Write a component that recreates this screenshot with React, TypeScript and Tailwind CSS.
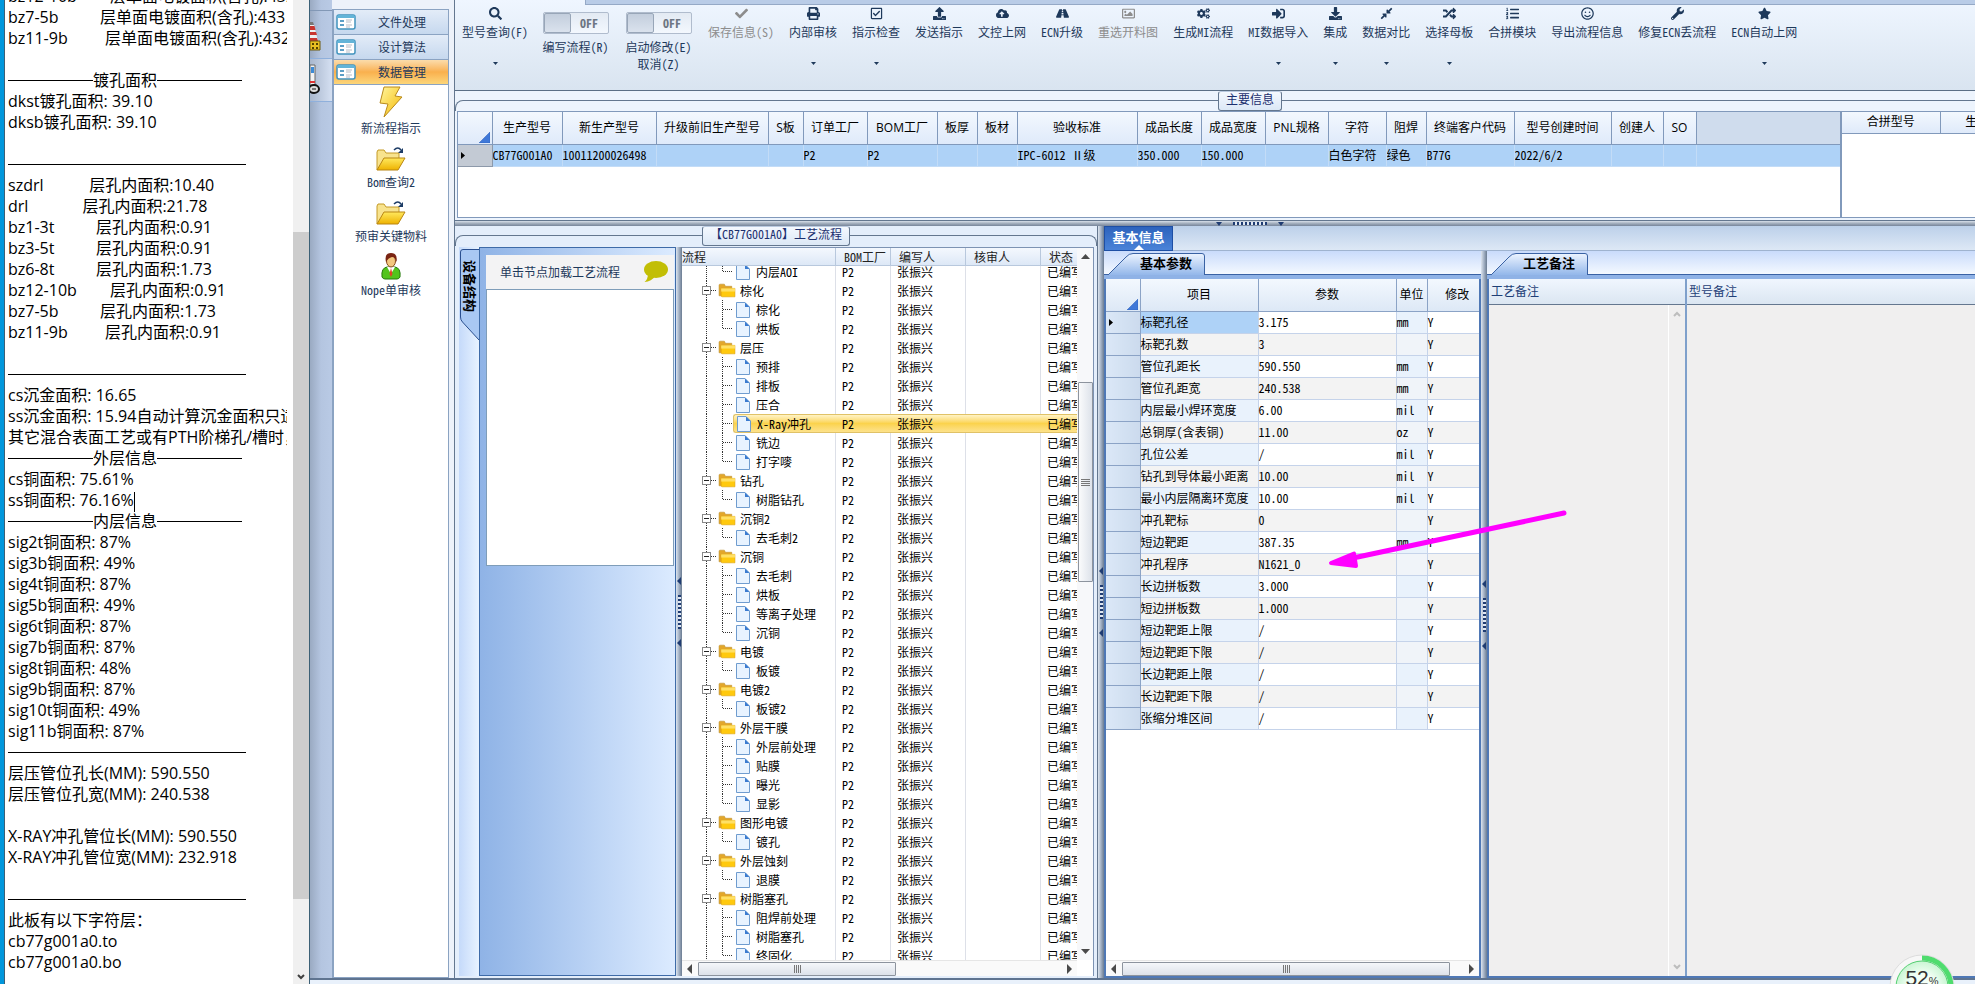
import React, { useEffect, useRef } from 'react';
import {
  FaSearch, FaCheck, FaPrint, FaRegCheckSquare, FaUpload, FaCloudUploadAlt, FaRoad, FaRegImage,
  FaCogs, FaSignInAlt, FaDownload, FaCompressAlt, FaRandom, FaListOl, FaRegSmile, FaWrench, FaStar,
} from 'react-icons/fa';

const SONG = "font-['Noto_Sans_Mono_CJK_SC','Noto_Sans_CJK_SC',monospace]";
const YAHEI = "font-['Open_Sans','Noto_Sans_CJK_SC',sans-serif]";

/* ---------- report window ---------- */

const RULE = '#rule';
const report: string[] = [
  'bz12-10b        层单面电镀面积(含孔):432',
  'bz7-5b          层单面电镀面积(含孔):433',
  'bz11-9b         层单面电镀面积(含孔):432',
  '', '#镀孔面积', 'dkst镀孔面积: 39.10', 'dksb镀孔面积: 39.10', '', RULE,
  'szdrl           层孔内面积:10.40',
  'drl             层孔内面积:21.78',
  'bz1-3t          层孔内面积:0.91',
  'bz3-5t          层孔内面积:0.91',
  'bz6-8t          层孔内面积:1.73',
  'bz12-10b        层孔内面积:0.91',
  'bz7-5b          层孔内面积:1.73',
  'bz11-9b         层孔内面积:0.91',
  '', RULE, 'cs沉金面积: 16.65', 'ss沉金面积: 15.94自动计算沉金面积只适用',
  '其它混合表面工艺或有PTH阶梯孔/槽时，请', '#外层信息', 'cs铜面积: 75.61%', 'ss铜面积: 76.16%', '#内层信息',
  'sig2t铜面积: 87%', 'sig3b铜面积: 49%', 'sig4t铜面积: 87%', 'sig5b铜面积: 49%', 'sig6t铜面积: 87%',
  'sig7b铜面积: 87%', 'sig8t铜面积: 48%', 'sig9b铜面积: 87%', 'sig10t铜面积: 49%', 'sig11b铜面积: 87%',
  RULE, '层压管位孔长(MM): 590.550', '层压管位孔宽(MM): 240.538', '',
  'X-RAY冲孔管位长(MM): 590.550', 'X-RAY冲孔管位宽(MM): 232.918', '', RULE,
  '此板有以下字符层：', 'cb77g001a0.to', 'cb77g001a0.bo', '', '',
];

function ReportLine({ text }: { text: string }) {
  if (text === RULE) {
    return <div className="flex h-[21px] w-[238px] items-center"><hr className="w-full border-t border-black" /></div>;
  }
  if (text.startsWith('#')) {
    return (
      <div className="flex h-[21px] w-[234px] items-center">
        <hr className="flex-1 border-t border-black" />
        <span>{text.slice(1)}</span>
        <hr className="flex-1 border-t border-black" />
      </div>
    );
  }
  return (
    <div className="h-[21px]">
      {text}
      {text === 'ss铜面积: 76.16%' && <span className="inline-block h-[20px] w-px bg-black align-middle" />}
    </div>
  );
}

function ReportWindow() {
  const box = useRef<HTMLDivElement>(null);
  useEffect(() => { if (box.current) box.current.scrollTop = 14; }, []);
  return (
    <section className="flex w-[310px] shrink-0 border-l-4 border-[#0197dc]">
      <div className="flex min-w-0 flex-1 border-x border-[#3c6076] bg-white">
        <div ref={box} className={`min-w-0 flex-1 overflow-hidden whitespace-pre pl-[3px] text-base leading-[21px] text-black ${YAHEI}`}>
          <div className="w-[279px] overflow-hidden">
            {report.map((t, i) => <ReportLine key={i} text={t} />)}
          </div>
        </div>
        <div className="flex w-[16px] shrink-0 flex-col bg-[#f0f0f0]">
          <div className="h-[232px]" />
          <div className="h-[667px] bg-[#cdcdcd]" />
          <svg className="mt-auto mb-[3px] ml-[4px] h-[8px] w-[8px]" viewBox="0 0 8 8" fill="none" stroke="#404040" strokeWidth="2"><path d="M1 2l3 3 3-3" /></svg>
        </div>
      </div>
    </section>
  );
}

/* ---------- left navigation ---------- */

function EdgeStrip() {
  return (
    <div className="flex w-[22px] shrink-0 flex-col bg-gradient-to-r from-[#9aaac2] via-[#b4c5e0] to-[#b9cae5]">
      <div className="h-[11px] border-b border-[#8298b6]" />
      <div className="h-[48px] border-b border-[#8fb0dc] pt-[10px]">
        <svg className="h-[30px] w-[11px]" viewBox="0 0 11 30">
          <path d="M0 1h3l1 3H0z" fill="#777" /><path d="M0 4h4l4 16H0z" fill="#eee" />
          <path d="M0 5h4.500l1 4H0zM0 11h6l1 3H0zM0 17h7l1 3H0z" fill="#c8352f" />
          <path d="M0 20h10v9H0z" fill="#e8c022" stroke="#6c5a10" /><path d="M2 22h2v2H2zM6 22h2v2H6zM2 26h2v2H2zM6 26h2v2H6z" fill="#554400" />
        </svg>
      </div>
      <div className="h-[43px] border-b border-[#8fb0dc] bg-gradient-to-r from-[#a9b7cd] to-[#d5e0f2] pt-[5px]">
        <svg className="h-[31px] w-[11px]" viewBox="0 0 11 31">
          <path d="M0 1h5v20H0z" fill="#f3f3f3" stroke="#666" /><path d="M1 3h3v6H1z" fill="#3d8bd6" /><path d="M0 17h5v2H0z" fill="#d33" />
          <ellipse cx="4" cy="25" rx="5" ry="4" fill="#ddd" stroke="#111" strokeWidth="2" /><path d="M2 25h4" stroke="#111" />
        </svg>
      </div>
    </div>
  );
}

function FormIcon() {
  return (
    <svg className="h-[16px] w-[20px]" viewBox="0 0 20 16">
      <rect x="1" y="1" width="18" height="14" rx="2" fill="#fff" stroke="#4193bd" strokeWidth="1.500" />
      <path d="M1 3q0-2 2-2h14q2 0 2 2v1H1z" fill="#63b4d8" />
      <path d="M4 6h4v2H4zM4 10h4v2H4z" fill="#5c9fc6" /><path d="M10 6h6M10 8h5M10 11h6M10 13h4" stroke="#b5bcc6" />
    </svg>
  );
}

function Bolt() {
  return (
    <svg className="h-[32px] w-[24px]" viewBox="0 0 24 32">
      <defs><linearGradient id="bolt" x1="0" y1="0" x2="1" y2="1"><stop offset="0" stopColor="#fff6a0" /><stop offset="1" stopColor="#f5b800" /></linearGradient></defs>
      <path d="M5 1L21 1 16 10 23 11 5 31 9 18 1 17z" fill="url(#bolt)" stroke="#b98a1c" strokeLinejoin="round" />
    </svg>
  );
}

function OpenFolder() {
  return (
    <svg className="h-[26px] w-[30px]" viewBox="0 0 30 26">
      <defs><linearGradient id="of" x1="0" y1="0" x2="0" y2="1"><stop offset="0" stopColor="#ffe95e" /><stop offset="1" stopColor="#eeb200" /></linearGradient></defs>
      <path d="M1 24V6l1-2h6l2 3h13v5" fill="#f8e38e" stroke="#c49a26" />
      <path d="M1 24L8 12H29L22 24z" fill="url(#of)" stroke="#b98612" strokeLinejoin="round" />
      <path d="M18 4q4-4 7 0" fill="none" stroke="#1d3c66" strokeWidth="1.500" /><path d="M27 2v5h-5z" fill="#1d3c66" />
    </svg>
  );
}

function Person() {
  return (
    <svg className="h-[28px] w-[22px]" viewBox="0 0 22 28">
      <path d="M2 25q-1-9 5-10h8q6 1 5 10-1 2-3 2H5q-2 0-3-2z" fill="#52c41c" stroke="#257a0b" />
      <path d="M7 15l4 7 4-7z" fill="#fff" /><path d="M11 16l1.500 6-1.500 3-1.500-3z" fill="#e04326" />
      <ellipse cx="11" cy="9" rx="4.500" ry="6" fill="#f3c77e" stroke="#8a4a1a" />
      <path d="M6 10Q4 1 11 1t5.500 9Q15 5 12 5 8 6 6 10z" fill="#7a2413" />
    </svg>
  );
}

const navItems: [string, React.ReactNode][] = [
  ['新流程指示', <Bolt key="a" />], ['Bom查询2', <OpenFolder key="b" />], ['预审关键物料', <OpenFolder key="c" />], ['Nope单审核', <Person key="d" />],
];

function Navigation() {
  return (
    <nav className="flex w-[122px] shrink-0 flex-col bg-[#edf2fa] pr-[5px] pt-[9px] text-[#1e395b]">
      <div className="flex flex-1 flex-col border border-[#8ba3c2] border-l-2 bg-white">
        {['文件处理', '设计算法', '数据管理'].map((t, i) => (
          <button key={t} className={`flex h-[25px] items-center border-b border-[#8ba3c2] pl-[2px] ${i === 2 ? 'bg-gradient-to-b from-[#fbdcab] via-[#f9b04d] to-[#fcd67a]' : 'bg-gradient-to-b from-[#e3ecf8] to-[#c6d8ee]'}`}>
            <FormIcon />
            <span className="flex-1 text-center text-xs">{t}</span>
          </button>
        ))}
        {navItems.map(([label, icon]) => (
          <button key={label} className="flex h-[54px] flex-col items-center justify-end pb-[3px] text-xs leading-4">
            {icon}
            <span className="mt-[2px]">{label}</span>
          </button>
        ))}
      </div>
    </nav>
  );
}

/* ---------- toolbar ---------- */

type Tool = { label: string; icon: React.ReactNode; menu?: boolean; off?: boolean };
const tools: Tool[] = [
  { label: '保存信息(S)', icon: <FaCheck />, off: true },
  { label: '内部审核', icon: <FaPrint />, menu: true },
  { label: '指示检查', icon: <FaRegCheckSquare />, menu: true },
  { label: '发送指示', icon: <FaUpload /> },
  { label: '文控上网', icon: <FaCloudUploadAlt /> },
  { label: 'ECN升级', icon: <FaRoad /> },
  { label: '重选开料图', icon: <FaRegImage />, off: true },
  { label: '生成MI流程', icon: <FaCogs /> },
  { label: 'MI数据导入', icon: <FaSignInAlt />, menu: true },
  { label: '集成', icon: <FaDownload />, menu: true },
  { label: '数据对比', icon: <FaCompressAlt />, menu: true },
  { label: '选择母板', icon: <FaRandom />, menu: true },
  { label: '合拼模块', icon: <FaListOl /> },
  { label: '导出流程信息', icon: <FaRegSmile /> },
  { label: '修复ECN丢流程', icon: <FaWrench /> },
  { label: 'ECN自动上网', icon: <FaStar />, menu: true },
];

function ToolButton({ label, icon, menu, off }: Tool) {
  return (
    <button disabled={off} className={`flex h-[62px] shrink-0 flex-col items-center px-[7px] text-[13px] ${off ? 'text-[#8d8d8d]' : 'text-[#1e395b]'}`}>
      {icon}
      <span className="mt-[4px] text-xs leading-4">{label}</span>
      {menu && <svg className="mt-[22px] h-[3px] w-[5px] shrink-0" viewBox="0 0 5 3" fill="currentColor"><path d="M0 0h5L2.500 3z" /></svg>}
    </button>
  );
}

function ToggleButton({ lines }: { lines: string[] }) {
  return (
    <button className="flex w-[83px] shrink-0 flex-col items-center pt-[5px] text-xs leading-[17px] text-[#1e395b]">
      <span className="mb-[4px] flex h-[22px] w-[66px] rounded-[2px] border border-[#b0bccd] bg-gradient-to-b from-[#e3eaf3] to-[#f3f8fe]">
        <span className="w-[27px] rounded-[2px] border border-[#98a6b8] bg-gradient-to-b from-[#c3cedd] to-[#dae2ed]" />
        <span className="flex-1 text-center font-bold leading-5 text-[#6d7683]">OFF</span>
      </span>
      {lines.map((l) => <span key={l}>{l}</span>)}
    </button>
  );
}

function Toolbar() {
  return (
    <header className="flex h-[91px] shrink-0 flex-col border-b border-[#5b6f86] bg-gradient-to-b from-[#eff6ff] to-[#d9e4f0]">
      <div className="ml-[130px] h-[5px] shrink-0 border-b border-l border-[#95a9c6] bg-[#b9cce7]" />
      <div className="flex items-start gap-px overflow-hidden pt-[2px]">
        <ToolButton label="型号查询(F)" icon={<FaSearch />} menu />
        <div className="-ml-[2px] flex">
          <ToggleButton lines={['编写流程(R)']} />
          <ToggleButton lines={['启动修改(E)', '取消(Z)']} />
        </div>
        {tools.map((t) => <ToolButton key={t.label} {...t} />)}
      </div>
    </header>
  );
}

/* ---------- shared pieces ---------- */

const Corner = () => (
  <svg className="ml-auto mr-[2px] mt-auto h-[11px] w-[11px]" viewBox="0 0 11 11"><path d="M11 0v11H0z" fill="#3f78d8" stroke="#2a5db8" strokeWidth="0.500" /></svg>
);
const RowMark = () => <svg className="ml-[3px] h-[7px] w-[4px]" viewBox="0 0 4 7"><path d="M0 0l4 3.500L0 7z" fill="#000" /></svg>;

function VerticalSplitter() {
  return (
    <div className="flex w-[6px] shrink-0 flex-col items-center justify-center gap-[10px] bg-gradient-to-r from-[#dde5ef] via-[#a3b1c4] to-[#6b7c92]">
      <svg className="h-[8px] w-[4px]" viewBox="0 0 4 8"><path d="M4 0v8L0 4z" fill="#1f3c72" /></svg>
      <div className="h-[34px] w-[3px] bg-[repeating-linear-gradient(to_bottom,#1f3c72_0_2px,#dfe7f2_2px_4px)]" />
      <svg className="h-[8px] w-[4px]" viewBox="0 0 4 8"><path d="M4 0v8L0 4z" fill="#1f3c72" /></svg>
    </div>
  );
}

function Legend({ children, className }: { children: React.ReactNode; className: string }) {
  return (
    <div className={`relative flex h-[20px] justify-center before:absolute before:inset-x-0 before:top-[9px] before:bottom-0 before:rounded-t-lg before:border before:border-b-0 before:border-[#64778f] ${className}`}>
      <h2 className="relative rounded-[3px] border border-[#64778f] border-t-[#b9c9df] bg-gradient-to-b from-[#f4f8fe] to-[#dce8f6] px-[7px] pb-[3px] text-xs leading-[14px] text-[#1c2f6e]">{children}</h2>
    </div>
  );
}

function HScroll({ thumb }: { thumb: string }) {
  return (
    <div className="flex h-[16px] min-w-0 flex-1 items-center border-t border-[#e6e6e6] bg-[#fafafa] px-[5px]">
      <svg className="h-[10px] w-[5px] shrink-0" viewBox="0 0 5 10"><path d="M5 0v10L0 5z" fill="#4a4a4a" /></svg>
      <div className={`ml-[6px] mr-[5px] flex h-[14px] items-center justify-center rounded-[1px] border border-[#8d949e] bg-gradient-to-b from-[#f5f7fa] to-[#dde2ea] ${thumb}`}>
        <div className="h-[8px] w-[7px] bg-[repeating-linear-gradient(to_right,#777_0_1px,transparent_1px_2px)]" />
      </div>
      <svg className="ml-auto h-[10px] w-[5px] shrink-0" viewBox="0 0 5 10"><path d="M0 0v10L5 5z" fill="#4a4a4a" /></svg>
    </div>
  );
}

/* ---------- main information ---------- */

const mainCols: [string, string, string][] = [
  ['生产型号', 'CB77G001A0', 'w-[70px]'], ['新生产型号', '10011200026498', 'w-[94px]'], ['升级前旧生产型号', '', 'w-[112px]'],
  ['S板', '', 'w-[35px]'], ['订单工厂', 'P2', 'w-[64px]'], ['BOM工厂', 'P2', 'w-[70px]'], ['板厚', '', 'w-[40px]'],
  ['板材', '', 'w-[40px]'], ['验收标准', 'IPC-6012 Ⅱ级', 'w-[120px]'], ['成品长度', '350.000', 'w-[64px]'],
  ['成品宽度', '150.000', 'w-[64px]'], ['PNL规格', '', 'w-[63px]'], ['字符', '白色字符', 'w-[58px]'], ['阻焊', '绿色', 'w-[40px]'],
  ['终端客户代码', 'B77G', 'w-[88px]'], ['型号创建时间', '2022/6/2', 'w-[97px]'], ['创建人', '', 'w-[52px]'], ['SO', '', 'w-[33px]'],
];

function MainInfo() {
  return (
    <section className="flex h-[130px] shrink-0 flex-col border-b border-[#64778f] bg-[#edf4fd]">
      <Legend className="-mr-[70px]">主要信息</Legend>
      <div className="mb-[2px] ml-[2px] flex min-h-0 flex-1 border border-r-0 border-[#8199bb] bg-white">
        <div className="min-w-0 flex-1 overflow-hidden border-r-2 border-[#8199bb]">
          <table className="w-full table-fixed border-collapse text-xs text-black">
            <thead>
              <tr className={`h-[32px] bg-gradient-to-b from-[#f3f8fe] to-[#dfeafa] ${YAHEI}`}>
                <th className="w-[34px] border-b border-r border-[#8199bb] p-0"><div className="flex h-[31px]"><Corner /></div></th>
                {mainCols.map(([h, , w]) => (
                  <th key={h} className={`overflow-hidden whitespace-nowrap border-b border-r border-[#8199bb] p-0 font-normal ${w}`}>{h}</th>
                ))}
                <th className="border-b border-[#8199bb] bg-[#cfdced] p-0" />
              </tr>
            </thead>
            <tbody>
              <tr className="h-[22px] bg-[#aed2f7]">
                <td className="border-b border-r border-[#8d99aa] bg-[#c3cad4] p-0"><RowMark /></td>
                {mainCols.map(([h, v]) => (
                  <td key={h} className="overflow-hidden whitespace-nowrap border-b border-r border-[#c3dcf7] p-0">{v}</td>
                ))}
                <td className="border-b border-[#c3dcf7] p-0" />
              </tr>
            </tbody>
          </table>
        </div>
        <div className="w-[133px] shrink-0 overflow-hidden">
          <table className="w-[196px] table-fixed border-collapse text-xs text-black">
            <thead>
              <tr className={`h-[21px] bg-gradient-to-b from-[#f3f8fe] to-[#dfeafa] ${YAHEI}`}>
                <th className="border-b border-r border-[#8199bb] p-0 font-normal">合拼型号</th>
                <th className="border-b border-[#8199bb] p-0 font-normal">生产型号</th>
              </tr>
            </thead>
          </table>
        </div>
      </div>
    </section>
  );
}

function HorizontalSplitter() {
  return (
    <div className="-mr-[70px] flex h-[5px] shrink-0 items-center justify-center gap-[11px] bg-gradient-to-b from-[#d7dfe9] via-[#a1adbc] to-[#77859a]">
      <svg className="h-[4px] w-[6px]" viewBox="0 0 6 4"><path d="M0 0h6L3 4z" fill="#1f3c72" /></svg>
      <div className="h-[3px] w-[34px] bg-[repeating-linear-gradient(to_right,#1f3c72_0_2px,#dfe7f2_2px_4px)]" />
      <svg className="h-[4px] w-[6px]" viewBox="0 0 6 4"><path d="M0 0h6L3 4z" fill="#1f3c72" /></svg>
    </div>
  );
}

/* ---------- process tree ---------- */

const groups: [string, string[]][] = [
  ['', ['内层AOI']], ['棕化', ['棕化', '烘板']], ['层压', ['预排', '排板', '压合', 'X-Ray冲孔', '铣边', '打字嘜']],
  ['钻孔', ['树脂钻孔']], ['沉铜2', ['去毛刺2']], ['沉铜', ['去毛刺', '烘板', '等离子处理', '沉铜']],
  ['电镀', ['板镀']], ['电镀2', ['板镀2']], ['外层干膜', ['外层前处理', '贴膜', '曝光', '显影']],
  ['图形电镀', ['镀孔']], ['外层蚀刻', ['退膜']], ['树脂塞孔', ['阻焊前处理', '树脂塞孔', '终固化']],
];
type Node = { label: string; leaf: boolean; last: boolean };
const nodes: Node[] = groups.flatMap(([g, kids]) => [
  ...(g ? [{ label: g, leaf: false, last: false }] : []),
  ...kids.map((k, i) => ({ label: k, leaf: true, last: i === kids.length - 1 })),
]);

const dots = { stroke: '#333', strokeDasharray: '1 1', fill: 'none' };

function FolderRow({ label }: { label: string }) {
  return (
    <div className="flex h-[19px] items-center">
      <svg className="h-[19px] w-[36px] shrink-0" viewBox="0 0 36 19">
        <path d="M24.500 0v5M24.500 14v5M29 9.500h5" {...dots} />
        <rect x="20.500" y="5.500" width="8" height="8" fill="#fff" stroke="#8a8a8a" /><path d="M22 9.500h5" stroke="#222" />
      </svg>
      <svg className="h-[15px] w-[18px] shrink-0" viewBox="0 0 17 14">
        <path d="M1 12V2q0-1 1-1h4l1 2h6v9z" fill="#e3a72a" stroke="#b98a2a" strokeWidth="0.500" />
        <path d="M3 5h13v8H4q-1 0-1-1z" fill="#ffc90e" stroke="#d99a06" strokeWidth="0.500" /><path d="M3 5h13v3H3z" fill="#ffe066" />
      </svg>
      <span className="pl-[4px]">{label}</span>
    </div>
  );
}

function LeafRow({ label, last }: { label: string; last: boolean }) {
  const on = label === 'X-Ray冲孔';
  return (
    <div className="flex h-[19px] items-center">
      <svg className="h-[19px] w-[51px] shrink-0" viewBox="0 0 51 19">
        <path d="M24.500 0v19" {...dots} /><path d={last ? 'M40.500 0v10' : 'M40.500 0v19'} {...dots} /><path d="M41 9.500h9" {...dots} />
      </svg>
      <div className={`flex h-[19px] flex-1 items-center pl-[3px] ${on ? 'rounded-l-[3px] border-y border-l border-[#e0c267] bg-gradient-to-b from-[#fff3c4] via-[#fbd34c] to-[#fde28a]' : ''}`}>
        <svg className="h-[16px] w-[14px] shrink-0" viewBox="0 0 14 16">
          <path d="M1 .5h8l4.500 4.500v10.500H.5V.5z" fill="#e8f3ff" stroke="#6f9ccf" /><path d="M9 .5V5h4.500z" fill="#3b7bd0" />
        </svg>
        <span className="pl-[6px]">{label}</span>
      </div>
    </div>
  );
}

const treeHeads = ['BOM工厂', '编写人', '核审人', '状态'];

function ProcessTree() {
  const box = useRef<HTMLDivElement>(null);
  useEffect(() => { if (box.current) box.current.scrollTop = 4; }, []);
  return (
    <div className="flex min-w-0 flex-1 flex-col border-r border-t border-[#7d93b3] bg-white">
      <div className="flex min-h-0 flex-1">
        <div ref={box} className="min-w-0 flex-1 overflow-hidden">
          <table className="w-full table-fixed border-separate border-spacing-0 whitespace-nowrap text-xs text-black">
            <thead className="sticky top-0 z-10">
              <tr className="h-[18px] text-left leading-[17px] text-[#222]">
                <th className="w-[154px] border-b border-r border-[#b8c8dd] bg-gradient-to-b from-[#f4f8fe] to-[#dde8f6] p-0 font-normal">流程</th>
                {treeHeads.map((h, i) => (
                  <th key={h} className={`overflow-hidden border-b border-[#b8c8dd] bg-gradient-to-b from-[#f4f8fe] to-[#dde8f6] p-0 pl-[8px] font-normal ${i === 0 ? 'w-[55px] border-r' : i === 3 ? '' : 'w-[75px] border-r'}`}>{h}</th>
                ))}
              </tr>
            </thead>
            <tbody>
              {nodes.map((n, i) => {
                const on = n.label === 'X-Ray冲孔';
                const cell = on
                  ? 'h-[19px] overflow-hidden border-y border-[#e0c267] bg-gradient-to-b from-[#fff3c4] via-[#fbd34c] to-[#fde28a] p-0 pl-[6px]'
                  : 'h-[19px] overflow-hidden border-r border-[#dde0e8] p-0 pl-[6px]';
                return (
                  <tr key={i} className="leading-[17px]">
                    <td className={`h-[19px] p-0 ${on ? '' : 'border-r border-[#dde0e8]'}`}>{n.leaf ? <LeafRow label={n.label} last={n.last} /> : <FolderRow label={n.label} />}</td>
                    <td className={cell}>P2</td><td className={cell}>张振兴</td><td className={cell} />
                    <td className={on ? cell : 'h-[19px] overflow-hidden p-0 pl-[6px]'}>已编写</td>
                  </tr>
                );
              })}
              <tr><td className="h-[19px]" /></tr>
            </tbody>
          </table>
        </div>
        <div className="flex w-[16px] shrink-0 flex-col items-center bg-[#f7f8fa]">
          <svg className="mt-[6px] h-[5px] w-[9px]" viewBox="0 0 9 5"><path d="M0 5h9L4.500 0z" fill="#4a4a4a" /></svg>
          <div className="mt-[123px] flex h-[200px] w-[15px] items-center justify-center rounded-[1px] border border-[#8d949e] bg-gradient-to-r from-[#fafbfc] to-[#dde2ea]">
            <div className="h-[7px] w-[9px] bg-[repeating-linear-gradient(to_bottom,#777_0_1px,transparent_1px_2px)]" />
          </div>
          <svg className="mb-[6px] mt-auto h-[5px] w-[9px]" viewBox="0 0 9 5"><path d="M0 0h9L4.500 5z" fill="#4a4a4a" /></svg>
        </div>
      </div>
      <div className="flex shrink-0">
        <HScroll thumb="w-[198px]" />
        <div className="w-[16px] bg-white" />
      </div>
    </div>
  );
}

function ProcessPanel() {
  return (
    <section className="flex w-[643px] shrink-0 flex-col border-r border-[#64778f] bg-[#e4eefb]">
      <Legend className="">【CB77G001A0】工艺流程</Legend>
      <div className="mb-[2px] ml-[4px] mr-[3px] mt-[1px] flex min-h-0 flex-1">
        <div className="w-[20px] shrink-0 bg-gradient-to-r from-[#c5dafa] to-[#e8f3ff] pt-[2px]">
          <div className="relative h-[92px] w-[20px]">
            <svg className="absolute inset-0 h-[92px] w-[20px]" viewBox="0 0 20 92">
              <path d="M20 .5H4Q1.500 .5 1.500 3V68q0 3 2 5L20 91" fill="#a9c8f3" stroke="#2a4f8f" />
            </svg>
            <span className="relative block pl-[3px] pt-[11px] text-[13px] font-bold leading-[16px] text-black [text-orientation:sideways] [writing-mode:vertical-rl]">设备结构</span>
          </div>
        </div>
        <div className="flex w-[197px] shrink-0 flex-col border border-[#3e6ba8] bg-gradient-to-r from-[#8fb3e6] to-[#dcebff] pl-[6px] pr-px pt-[7px]">
          <div className="flex h-[34px] shrink-0 items-center justify-between bg-[#f3f3f4] pl-[14px] pr-[6px] text-xs text-[#1e395b]">
            单击节点加载工艺流程
            <svg className="h-[22px] w-[25px]" viewBox="0 0 25 22"><ellipse cx="13" cy="8.500" rx="12" ry="8.500" fill="#c2be05" /><path d="M5 13q0 5-3.500 8 7-.5 11-6z" fill="#c2be05" /></svg>
          </div>
          <div className="h-[277px] shrink-0 border border-[#7f9db9] bg-white" />
        </div>
        <VerticalSplitter />
        <ProcessTree />
      </div>
    </section>
  );
}

/* ---------- parameters ---------- */

const params: [string, string, string][] = [
  ['标靶孔径', '3.175', 'mm'], ['标靶孔数', '3', ''], ['管位孔距长', '590.550', 'mm'], ['管位孔距宽', '240.538', 'mm'],
  ['内层最小焊环宽度', '6.00', 'mil'], ['总铜厚(含表铜)', '11.00', 'oz'], ['孔位公差', '/', 'mil'], ['钻孔到导体最小距离', '10.00', 'mil'],
  ['最小内层隔离环宽度', '10.00', 'mil'], ['冲孔靶标', '0', ''], ['短边靶距', '387.35', 'mm'], ['冲孔程序', 'N1621_0', ''],
  ['长边拼板数', '3.000', ''], ['短边拼板数', '1.000', ''], ['短边靶距上限', '/', ''], ['短边靶距下限', '/', ''],
  ['长边靶距上限', '/', ''], ['长边靶距下限', '/', ''], ['张缩分堆区间', '/', ''],
];

function SlantTab({ children }: { children: React.ReactNode }) {
  return (
    <div className="h-[28px] shrink-0 border-b-4 border-[#8fb2e6] bg-gradient-to-b from-[#c9dbfb] to-[#f6faff] pt-[2px]">
      <div className="relative h-full border-b border-[#3a62a4] pl-[4px]">
        <svg className="absolute left-[4px] top-0 h-[22px] w-[98px]" viewBox="0 0 98 22">
          <defs><linearGradient id="tab" x1="0" y1="0" x2="0" y2="1"><stop offset="0" stopColor="#edf4ff" /><stop offset="1" stopColor="#93b7ea" /></linearGradient></defs>
          <path d="M0 22L18 4q3-3.500 7-3.500H94q2.500 0 2.500 2.500v19" fill="url(#tab)" stroke="#3a62a4" />
        </svg>
        <button className="relative block w-[98px] pl-[18px] text-center text-[13px] font-bold leading-[20px] text-black">{children}</button>
      </div>
    </div>
  );
}

function PointerArrow() {
  return (
    <svg className="pointer-events-none absolute left-[223px] top-[257px] z-20 h-[64px] w-[240px]" viewBox="0 0 240 64" fill="#ff00ff">
      <path d="M237 5L26 50" stroke="#ff00ff" strokeWidth="5" strokeLinecap="round" />
      <path d="M4 55L27 45.500 29 58z" stroke="#ff00ff" strokeWidth="4" strokeLinejoin="round" />
    </svg>
  );
}

function ParameterPanel() {
  return (
    <section className="relative flex w-[377px] shrink-0 flex-col">
      <SlantTab>基本参数</SlantTab>
      <div className="flex min-h-0 flex-1 flex-col border-x-2 border-b-2 border-[#4f78b5] bg-white">
        <table className="w-full table-fixed border-collapse whitespace-nowrap text-xs text-black">
          <thead>
            <tr className={`h-[32px] bg-gradient-to-b from-[#f3f8fe] to-[#dde8f6] ${YAHEI}`}>
              <th className="w-[34px] border-b border-r border-[#8ba3c6] p-0"><div className="flex h-[30px]"><Corner /></div></th>
              <th className="w-[118px] border-b border-r border-[#8ba3c6] p-0 font-normal">项目</th>
              <th className="w-[138px] border-b border-r border-[#8ba3c6] p-0 font-normal">参数</th>
              <th className="w-[31px] border-b border-r border-[#8ba3c6] p-0 font-normal">单位</th>
              <th className="border-b border-[#8ba3c6] p-0 pl-[8px] font-normal">修改</th>
            </tr>
          </thead>
          <tbody>
            {params.map(([k, v, u], i) => (
              <tr key={k} className={`h-[22px] ${i % 2 ? 'bg-[#f3f3f3]' : 'bg-white'}`}>
                <td className="border-b border-r border-[#8ba3c6] bg-gradient-to-r from-[#dbe8f7] to-[#cbdaed] p-0">{i === 0 && <RowMark />}</td>
                <td className={`border-b border-r border-[#c5d3ea] p-0 ${i === 0 ? 'bg-[#aed2f7]' : i % 2 ? '' : 'bg-[#e9f2fc]'}`}>{k}</td>
                <td className="border-b border-r border-[#c5d3ea] p-0">{v}</td>
                <td className={`border-b border-r border-[#c5d3ea] p-0 ${i % 2 ? 'bg-[#f0f4f9]' : 'bg-[#e9f2fc]'}`}>{u}</td>
                <td className="border-b border-[#c5d3ea] p-0">Y</td>
              </tr>
            ))}
          </tbody>
        </table>
        <div className="mt-auto flex shrink-0"><HScroll thumb="w-[328px]" /></div>
      </div>
      <PointerArrow />
    </section>
  );
}

function NotesPanel() {
  return (
    <section className="flex min-w-0 flex-1 flex-col">
      <SlantTab>工艺备注</SlantTab>
      <div className="flex min-h-0 flex-1 border-b-2 border-l-2 border-[#4f78b5]">
        <label className="flex w-[198px] shrink-0 flex-col border-r-2 border-[#7fa0cb] text-xs text-[#1f3f77]">
          <span className="h-[26px] shrink-0 border-b border-[#64778f] bg-gradient-to-b from-[#f0f6fe] to-[#dbe6f2] pl-[2px] leading-[24px]">工艺备注</span>
          <span className="flex min-h-0 flex-1 bg-[#f0efef]">
            <textarea disabled className="min-w-0 flex-1 resize-none" />
            <span className="flex w-[17px] flex-col items-center justify-between border-l border-white py-[6px]">
              <svg className="h-[6px] w-[8px]" viewBox="0 0 8 6" fill="none" stroke="#bdbdbd" strokeWidth="2"><path d="M1 5l3-3 3 3" /></svg>
              <svg className="h-[6px] w-[8px]" viewBox="0 0 8 6" fill="none" stroke="#bdbdbd" strokeWidth="2"><path d="M1 1l3 3 3-3" /></svg>
            </span>
          </span>
        </label>
        <label className="flex min-w-0 flex-1 flex-col text-xs text-[#1f3f77]">
          <span className="h-[26px] shrink-0 border-b border-[#64778f] bg-gradient-to-b from-[#f0f6fe] to-[#dbe6f2] pl-[2px] leading-[24px]">型号备注</span>
          <textarea disabled className="min-h-0 flex-1 resize-none bg-[#f0efef]" />
        </label>
      </div>
    </section>
  );
}

function Details() {
  return (
    <div className="flex min-w-0 flex-1 flex-col">
      <div className="h-[25px] shrink-0 border-b border-[#9fb3cf] bg-gradient-to-b from-[#bcd0e9] to-[#dde8f5]">
        <button className="relative flex h-[25px] w-[69px] items-start justify-center border border-[#1e4fa4] bg-gradient-to-b from-[#2d63bd] to-[#4a83d8] text-[13px] font-bold leading-[20px] text-white">
          基本信息
          <svg className="absolute bottom-0 left-[29px] h-[5px] w-[10px]" viewBox="0 0 10 5"><path d="M0 5h10L5 0z" fill="#fff" /></svg>
        </button>
      </div>
      <div className="flex min-h-0 flex-1">
        <ParameterPanel />
        <VerticalSplitter />
        <NotesPanel />
      </div>
    </div>
  );
}

function ProgressBall() {
  return (
    <div className="absolute -bottom-[36px] right-[20px] z-30 h-[66px] w-[66px]">
      <svg className="absolute inset-0 h-full w-full" viewBox="0 0 66 66">
        <defs><radialGradient id="ball"><stop offset="0.500" stopColor="#f4fff6" /><stop offset="1" stopColor="#c9f5d3" /></radialGradient></defs>
        <circle cx="33" cy="33" r="32" fill="#f7f7f7" stroke="#dcdcdc" />
        <path d="M33 4a29 29 0 0 1 0 58" fill="none" stroke="#4fdc6e" strokeWidth="5" />
        <circle cx="33" cy="33" r="26" fill="url(#ball)" stroke="#52cf70" />
      </svg>
      <div className="relative pt-[12px] text-center font-['Liberation_Sans',sans-serif] text-[21px] leading-[24px] text-[#333]">52<span className="text-[11px]">%</span></div>
    </div>
  );
}

export default function App() {
  return (
    <div className={`relative flex h-screen overflow-hidden bg-[#edf3fb] ${SONG}`}>
      <ReportWindow />
      <div className="flex min-w-0 flex-1 flex-col">
        <div className="flex min-h-0 flex-1">
          <EdgeStrip />
          <Navigation />
          <main className="flex min-w-0 flex-1 flex-col border-l border-[#64778f]">
            <Toolbar />
            <MainInfo />
            <HorizontalSplitter />
            <div className="flex min-h-0 flex-1">
              <ProcessPanel />
              <VerticalSplitter />
              <Details />
            </div>
          </main>
        </div>
        <footer className="h-[6px] shrink-0 border-t-2 border-[#5f7490] bg-[#e9f1fb]" />
      </div>
      <ProgressBall />
    </div>
  );
}
